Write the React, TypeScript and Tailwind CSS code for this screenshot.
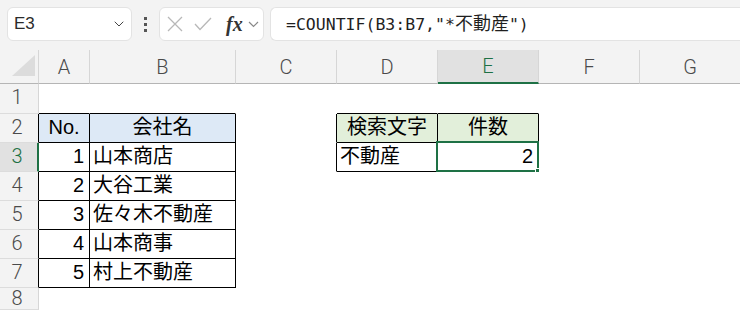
import { ChevronDown } from 'lucide-react'

// column widths include the right border pixel
const COLS = [
  { key: 'A', w: 'w-[51px]' },
  { key: 'B', w: 'w-[146px]' },
  { key: 'C', w: 'w-[101px]' },
  { key: 'D', w: 'w-[101px]' },
  { key: 'E', w: 'w-[101px]' },
  { key: 'F', w: 'w-[101px]' },
  { key: 'G', w: 'w-[101px]' },
]

type Cell = { text: string; align: 'left' | 'right' | 'center'; fill?: string }

const CELLS: Record<string, Cell> = {
  A2: { text: 'No.', align: 'center', fill: 'bg-[#dde9f6]' },
  B2: { text: '会社名', align: 'center', fill: 'bg-[#dde9f6]' },
  A3: { text: '1', align: 'right' },
  B3: { text: '山本商店', align: 'left' },
  A4: { text: '2', align: 'right' },
  B4: { text: '大谷工業', align: 'left' },
  A5: { text: '3', align: 'right' },
  B5: { text: '佐々木不動産', align: 'left' },
  A6: { text: '4', align: 'right' },
  B6: { text: '山本商事', align: 'left' },
  A7: { text: '5', align: 'right' },
  B7: { text: '村上不動産', align: 'left' },
  D2: { text: '検索文字', align: 'center', fill: 'bg-[#e2efda]' },
  E2: { text: '件数', align: 'center', fill: 'bg-[#e2efda]' },
  D3: { text: '不動産', align: 'left' },
  E3: { text: '2', align: 'right' },
}

const ROWS = [1, 2, 3, 4, 5, 6, 7, 8]

function inTable(col: string, row: number) {
  if ((col === 'A' || col === 'B') && row >= 2 && row <= 7) return true
  if ((col === 'D' || col === 'E') && row >= 2 && row <= 3) return true
  return false
}

function borderClasses(col: string, row: number) {
  const right = inTable(col, row) || (col === 'C' && (row === 2 || row === 3))
  const bottom = inTable(col, row) || (row === 1 && ['A', 'B', 'D', 'E'].includes(col))
  return `${right ? 'border-r-black' : 'border-r-transparent'} ${bottom ? 'border-b-black' : 'border-b-transparent'}`
}

function Toolbar() {
  return (
    <div className="flex h-[50px] items-start bg-[#f3f3f3] pl-[7px] pt-[7px]">
      <div className="flex h-[34px] w-[125px] items-center justify-between rounded-[6px] border border-[#e3e3e3] bg-white pl-[6px] pr-[4px]">
        <span className="text-[17px] text-[#2b2b2b]">E3</span>
        <ChevronDown size={16} strokeWidth={1.5} className="text-[#444]" />
      </div>
      <div className="flex h-[34px] w-[27px] flex-col items-center justify-center gap-[3px]">
        <span className="size-[3px] bg-[#555]" />
        <span className="size-[3px] bg-[#555]" />
        <span className="size-[3px] bg-[#555]" />
      </div>
      <div className="flex h-[34px] w-[105px] items-center rounded-[6px] border border-[#e3e3e3] bg-white pl-[7px]">
        <svg width="16" height="16" viewBox="0 0 16 16" className="text-[#b8b8b8]">
          <path d="M1 1 L15 15 M15 1 L1 15" stroke="currentColor" strokeWidth="1.3" fill="none" />
        </svg>
        <svg width="18" height="14" viewBox="0 0 18 14" className="ml-[11px] text-[#b8b8b8]">
          <path d="M1 7 L6 12.5 L17 1" stroke="currentColor" strokeWidth="1.3" fill="none" />
        </svg>
        <span className="ml-[14px] font-['Liberation_Serif',serif] text-[20px] font-bold italic leading-none text-[#333]">
          fx
        </span>
        <svg width="11" height="7" viewBox="0 0 11 7" className="ml-[5px] text-[#888]">
          <path d="M1 1 L5.5 5.5 L10 1" stroke="currentColor" strokeWidth="1.2" fill="none" />
        </svg>
      </div>
      <div className="ml-[6px] flex h-[34px] flex-1 items-center rounded-l-[6px] border border-r-0 border-[#e3e3e3] bg-white pl-[15px]">
        <span className="font-['DejaVu_Sans_Mono','Noto_Sans_CJK_JP',monospace] text-[16.5px] text-[#1f1f1f]">
          =COUNTIF(B3:B7,"*<span className="text-[18px]">不動産</span>")
        </span>
      </div>
    </div>
  )
}

function HeaderRow() {
  return (
    <div className="flex h-[34px] bg-[#f3f3f3] font-['Roboto','Liberation_Sans',sans-serif] text-[20px] font-light">
      <div className="relative w-[39px] shrink-0 border-r border-b border-r-[#d6d6d6] border-b-[#b5b5b5]">
        <svg width="23" height="21" viewBox="0 0 23 21" className="absolute right-[3px] bottom-[7px]">
          <polygon points="23,0 23,21 0,21" fill="#dcdcdc" />
        </svg>
      </div>
      {COLS.map((c) =>
        c.key === 'E' ? (
          <div
            key={c.key}
            className={`${c.w} flex shrink-0 items-center justify-center border-r border-b-2 border-r-[#d6d6d6] border-b-[#1e7145] bg-[#e1e1e1] text-[#1e7145]`}
          >
            {c.key}
          </div>
        ) : (
          <div
            key={c.key}
            className={`${c.w} flex shrink-0 items-center justify-center border-r border-b border-r-[#d6d6d6] border-b-[#b5b5b5] text-[#4a4a4a]`}
          >
            {c.key}
          </div>
        ),
      )}
    </div>
  )
}

function RowHeader({ row }: { row: number }) {
  if (row === 3) {
    return (
      <div className="flex w-[39px] shrink-0 items-center justify-center border-r-2 border-b border-r-[#1e7145] border-b-[#dcdcdc] bg-[#e1e1e1] pb-[3px] pr-[3px] font-['Roboto','Liberation_Sans',sans-serif] text-[20px] font-light text-[#1e7145]">
        {row}
      </div>
    )
  }
  const right = row >= 2 && row <= 7 ? 'border-r-black' : 'border-r-[#d6d6d6]'
  const last = row === 8 ? 'items-start pt-[2px] leading-[17px]' : 'items-center pb-[3px]'
  return (
    <div
      className={`flex w-[39px] shrink-0 justify-center border-r border-b ${last} ${right} border-b-[#dcdcdc] bg-[#f3f3f3] pr-[4px] font-['Roboto','Liberation_Sans',sans-serif] text-[20px] font-light text-[#4a4a4a]`}
    >
      {row}
    </div>
  )
}

function SheetRow({ row }: { row: number }) {
  const h = row === 1 ? 'h-[30px]' : row === 8 ? 'h-[22px]' : 'h-[29px]'
  return (
    <div className={`flex ${h}`}>
      <RowHeader row={row} />
      {COLS.map((c) => {
        const id = `${c.key}${row}`
        const cell = CELLS[id]
        const align =
          cell?.align === 'right' ? 'justify-end pr-[5px]' : cell?.align === 'center' ? 'justify-center' : 'justify-start pl-[3px]'
        return (
          <div
            key={id}
            className={`${c.w} relative flex shrink-0 items-center border-r border-b pb-[2px] ${borderClasses(c.key, row)} ${align} ${cell?.fill ?? 'bg-white'}`}
          >
            {cell && <span className="text-[20px] leading-none text-black">{cell.text}</span>}
            {id === 'E3' && (
              <>
                <div className="pointer-events-none absolute -top-[2px] -left-[2px] -right-[1px] -bottom-[1px] border-2 border-[#1e7145]" />
                <div className="absolute -right-[4px] -bottom-[4px] size-[7px] border border-white bg-[#1e7145]" />
              </>
            )}
          </div>
        )
      })}
    </div>
  )
}

export default function App() {
  return (
    <div className="h-[310px] w-[740px] overflow-hidden bg-white font-['Liberation_Sans','Noto_Sans_CJK_JP',sans-serif]">
      <Toolbar />
      <HeaderRow />
      {ROWS.map((r) => (
        <SheetRow key={r} row={r} />
      ))}
    </div>
  )
}
